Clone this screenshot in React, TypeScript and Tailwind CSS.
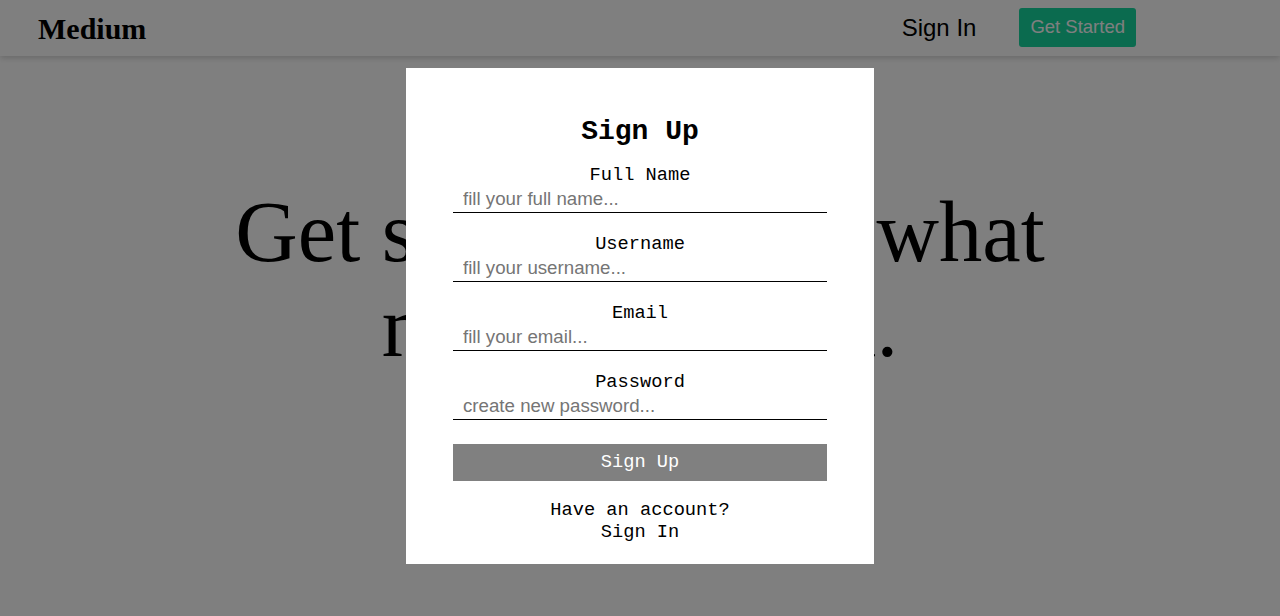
import React from 'react';

const mono = "font-['Liberation_Mono','Courier_New',monospace]";

const Field = ({ label, placeholder, type = 'text' }: { label: string; placeholder: string; type?: string }) => {
  return (
    <div className="flex flex-col mt-[20px] first:mt-0">
      <label className={`${mono} text-[18.7px] leading-[22px] text-black text-center`}>{label}</label>
      <input
        type={type}
        placeholder={placeholder}
        className="h-[27px] w-full border-0 border-b border-black outline-none px-[10px] text-[18.7px] font-['Liberation_Sans',Arial,sans-serif] placeholder:text-[#757575] bg-transparent"
      />
    </div>
  );
};

const App = () => {
  return (
    <div className="relative min-h-[616px] bg-white overflow-hidden">
      {/* Navbar */}
      <header className="h-[56px] bg-white shadow-[0_2px_6px_rgba(0,0,0,0.18)] flex items-center justify-between pl-[38px] pr-[144px]">
        <span className="font-['Liberation_Serif','Times_New_Roman',serif] font-bold text-[30px] text-black">
          Medium
        </span>
        <div className="flex items-center gap-[43px]">
          <a className="font-['Liberation_Sans',Arial,sans-serif] text-[24px] text-black cursor-pointer">Sign In</a>
          <button className="h-[39px] px-[11px] mb-[2px] rounded-[3px] bg-[#17d69f] text-white font-['Liberation_Sans',Arial,sans-serif] text-[18.5px]">
            Get Started
          </button>
        </div>
      </header>

      {/* Hero */}
      <main className="pt-[129px] text-center">
        <h1 className="font-['Liberation_Serif','Times_New_Roman',serif] text-[86.5px] leading-[95px] text-black">
          Get smarter about what
          <br />
          matters to you.
        </h1>
      </main>

      {/* Modal */}
      <div className="fixed inset-0 bg-black/50">
        <div className="mx-auto mt-[68px] w-[468px] bg-white px-[47px] pt-[48px] pb-[21px] flex flex-col">
          <h2 className={`${mono} font-bold text-[28px] leading-[32px] text-black text-center`}>Sign Up</h2>
          <form className="flex flex-col mt-[16px]" onSubmit={(e) => e.preventDefault()}>
            <Field label="Full Name" placeholder="fill your full name..." />
            <Field label="Username" placeholder="fill your username..." />
            <Field label="Email" placeholder="fill your email..." type="email" />
            <Field label="Password" placeholder="create new password..." type="password" />
            <button type="submit" className={`${mono} mt-[24px] h-[37px] w-full bg-[#808080] text-white text-[18.7px]`}>
              Sign Up
            </button>
          </form>
          <div className={`${mono} mt-[18px] text-[18.7px] leading-[22px] text-black text-center`}>
            <p>Have an account?</p>
            <a className="cursor-pointer">Sign In</a>
          </div>
        </div>
      </div>
    </div>
  );
};

export default App;
